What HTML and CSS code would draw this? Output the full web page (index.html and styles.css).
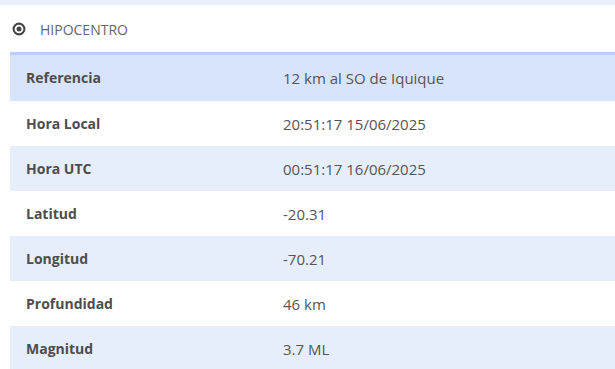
FILE: index.html
```html
<!DOCTYPE html>
<html lang="es">
<head>
<meta charset="utf-8">
<link rel="stylesheet" href="styles.css">
</head>
<body>
<div class="band"></div>
<div class="section-title">
  <svg class="icon" width="14" height="14" viewBox="0 0 14 14"><circle cx="7" cy="7" r="5.4" fill="none" stroke="#444" stroke-width="2.1"/><circle cx="7" cy="7" r="2.5" fill="#444"/></svg>
  <span>HIPOCENTRO</span>
</div>
<table class="data">
  <tr class="head"><th>Referencia</th><td>12 km al SO de Iquique</td></tr>
  <tr><th>Hora Local</th><td>20:51:17 15/06/2025</td></tr>
  <tr class="alt"><th>Hora UTC</th><td>00:51:17 16/06/2025</td></tr>
  <tr><th>Latitud</th><td>-20.31</td></tr>
  <tr class="alt"><th>Longitud</th><td>-70.21</td></tr>
  <tr><th>Profundidad</th><td>46 km</td></tr>
  <tr class="alt"><th>Magnitud</th><td>3.7 ML</td></tr>
</table>
</body>
</html>
```
FILE: styles.css
```css
html, body {
  margin: 0;
  padding: 0;
  background: #ffffff;
  overflow: hidden;
}
body {
  font-family: "Open Sans", "Liberation Sans", sans-serif;
  font-size: 14px;
  color: #555;
}
.band {
  height: 5px;
  background: #e8effb;
}
.section-title {
  height: 47px;
  display: flex;
  align-items: center;
  padding-left: 12px;
  gap: 14px;
  color: #666;
  font-size: 14px;
}
.section-title span {
  padding-top: 1px;
}
.icon {
  display: block;
}
.data {
  margin-left: 10px;
  width: 605px;
  border-collapse: collapse;
}
.data tr {
  height: 45px;
}
.data th, .data td {
  padding: 0 16px;
  text-align: left;
  vertical-align: middle;
}
.data th {
  width: 225px;
  font-weight: 700;
  color: #4d4d4d;
}
.data td {
  color: #555;
  font-size: 15px;
  padding-top: 1px;
}
.data tr.head {
  height: 47px;
  background: #d8e4fb;
  border-top: 3px solid #b9cff7;
}
.data tr.alt {
  background: #e7eefb;
}
```
